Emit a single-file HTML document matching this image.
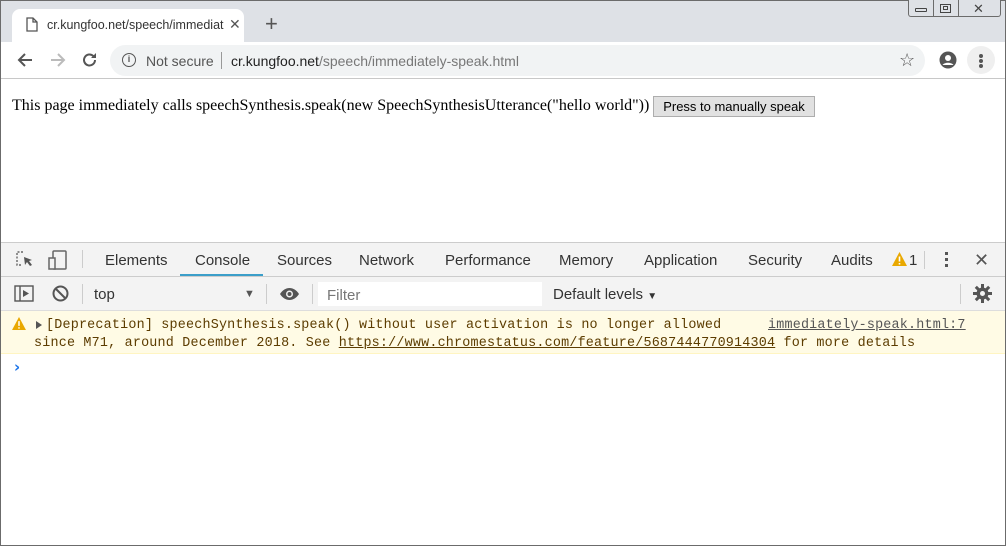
<!DOCTYPE html>
<html><head><style>
*{margin:0;padding:0;box-sizing:border-box}
body{width:1006px;height:546px;overflow:hidden;background:#fff;font-family:"Liberation Sans",sans-serif;position:relative}
.abs{position:absolute}
.ui{font-family:"Liberation Sans",sans-serif}
.mono{font-family:"Liberation Mono","DejaVu Sans Mono",monospace;font-size:13.4px;letter-spacing:0.2px;color:#5c3c00}
</style></head><body>
<div class="abs" style="left:0;top:0;width:1006px;height:546px;border:1px solid #6b6b6b;border-top:2px solid #6b6b6b"></div>
<div class="abs" style="left:1px;top:1px;width:1004px;height:41px;background:#dee1e6"></div>
<div class="abs" style="left:908px;top:0;width:93px;height:17px;border:1px solid #6b6b6b;border-top:none;border-radius:0 0 3px 3px;background:#dee1e6"></div>
<div class="abs" style="left:933px;top:0;width:1px;height:17px;background:#6b6b6b"></div>
<div class="abs" style="left:958px;top:0;width:1px;height:17px;background:#6b6b6b"></div>
<div class="abs" style="left:915px;top:8px;width:12px;height:4px;border:1px solid #444;border-radius:1px"></div>
<div class="abs" style="left:940px;top:4px;width:11px;height:9px;border:1px solid #444"></div>
<div class="abs" style="left:943px;top:6px;width:5px;height:4px;border:1px solid #444"></div>
<div class="abs ui" style="left:973px;top:1px;font-size:13px;color:#444">✕</div>
<div class="abs" style="left:12px;top:9px;width:232px;height:34px;background:#fff;border-radius:8px 8px 0 0"></div>
<svg class="abs" style="left:26px;top:17px" width="12" height="15" viewBox="0 0 12 15"><path d="M1 1h6l4 4v9H1z M7 1v4h4" fill="none" stroke="#555" stroke-width="1.3"/></svg>
<div class="abs ui" style="left:47px;top:18px;font-size:12.5px;color:#333;width:180px;overflow:hidden;white-space:nowrap">cr.kungfoo.net/speech/immediat</div>
<div class="abs ui" style="left:229px;top:16px;font-size:14px;color:#555">✕</div>
<div class="abs ui" style="left:265px;top:11px;font-size:22px;color:#555">+</div>
<div class="abs" style="left:1px;top:42px;width:1004px;height:37px;background:#fff;border-bottom:1px solid #c8c8c8"></div>
<svg class="abs" style="left:16px;top:52px" width="18" height="16" viewBox="0 0 18 16"><path d="M16 8H3M9 2L3 8l6 6" fill="none" stroke="#555" stroke-width="2"/></svg>
<svg class="abs" style="left:49px;top:52px" width="18" height="16" viewBox="0 0 18 16"><path d="M2 8h13M9 2l6 6-6 6" fill="none" stroke="#bbb" stroke-width="2"/></svg>
<svg class="abs" style="left:81px;top:51px" width="18" height="18" viewBox="0 0 18 18"><path d="M14 9a5.5 5.5 0 1 1-1.6-3.9" fill="none" stroke="#555" stroke-width="2"/><path d="M15 2v5h-5z" fill="#555"/></svg>
<div class="abs" style="left:110px;top:45px;width:815px;height:31px;background:#f1f3f4;border-radius:16px"></div>
<div class="abs" style="left:122px;top:53px;width:14px;height:14px;border:1.5px solid #555;border-radius:50%;font-size:9px;text-align:center;line-height:11px;color:#555;font-weight:bold">i</div>
<div class="abs ui" style="left:146px;top:53px;font-size:14px;color:#555">Not secure</div>
<div class="abs" style="left:221px;top:52px;width:1px;height:17px;background:#999"></div>
<div class="abs ui" style="left:231px;top:53px;font-size:14px;color:#222;white-space:nowrap">cr.kungfoo.net<span style="color:#777">/speech/immediately-speak.html</span></div>
<div class="abs ui" style="left:899px;top:50px;font-size:18px;color:#555">☆</div>
<svg class="abs" style="left:939px;top:51px" width="18" height="18" viewBox="0 0 18 18"><circle cx="9" cy="9" r="8.5" fill="#555"/><circle cx="9" cy="7" r="3" fill="#fff"/><path d="M3.5 14c2-3 9-3 11 0" fill="#fff"/></svg>
<div class="abs" style="left:967px;top:46px;width:28px;height:28px;border-radius:50%;background:#efefef"></div>
<div class="abs" style="left:979px;top:54px;width:4px;height:4px;border-radius:50%;background:#555;box-shadow:0 5px 0 #555,0 10px 0 #555"></div>
<div class="abs" style="left:12px;top:97px;font-family:'Liberation Serif',serif;font-size:16px;color:#000;white-space:nowrap">This page immediately calls speechSynthesis.speak(new SpeechSynthesisUtterance("hello world"))</div>
<div class="abs ui" style="left:653px;top:96px;width:162px;height:21px;background:#e1e1e1;border:1px solid #adadad;font-size:13px;text-align:center;line-height:19px;color:#000">Press to manually speak</div>
<div class="abs" style="left:1px;top:242px;width:1004px;height:35px;background:#f3f3f3;border-top:1px solid #ccc;border-bottom:1px solid #ccc"></div>
<svg class="abs" style="left:16px;top:251px" width="18" height="18" viewBox="0 0 18 18"><path d="M7 1H1v13h5" fill="none" stroke="#666" stroke-width="1.4" stroke-dasharray="2 1.5"/><path d="M8 6l8 3-3 1 3 4-2 1-3-4-2 3z" fill="#555"/></svg>
<svg class="abs" style="left:48px;top:250px" width="20" height="20" viewBox="0 0 20 20"><rect x="5" y="1" width="13" height="18" rx="1" fill="none" stroke="#666" stroke-width="1.5"/><rect x="1" y="8" width="6" height="11" fill="#f3f3f3" stroke="#666" stroke-width="1.5"/></svg>
<div class="abs" style="left:82px;top:250px;width:1px;height:18px;background:#ccc"></div>
<div class="abs ui" style="top:252px;font-size:15px;color:#333;left:0;width:900px;height:20px">
<span class="abs" style="left:105px">Elements</span><span class="abs" style="left:195px">Console</span><span class="abs" style="left:277px">Sources</span><span class="abs" style="left:359px">Network</span><span class="abs" style="left:445px">Performance</span><span class="abs" style="left:559px">Memory</span><span class="abs" style="left:644px">Application</span><span class="abs" style="left:748px">Security</span><span class="abs" style="left:831px">Audits</span></div>
<div class="abs" style="left:180px;top:274px;width:83px;height:2px;background:#3b9ec9"></div>
<svg class="abs" style="left:892px;top:252px" width="15" height="14" viewBox="0 0 15 14"><path d="M7.5 0L15 14H0z" fill="#e9a800"/><path d="M7.5 4.5v5M7.5 11v1.5" stroke="#fff" stroke-width="1.6"/></svg>
<div class="abs ui" style="left:909px;top:252px;font-size:15px;color:#333">1</div>
<div class="abs" style="left:924px;top:251px;width:1px;height:18px;background:#ccc"></div>
<div class="abs" style="left:945px;top:252px;width:3px;height:3px;background:#555;box-shadow:0 6px 0 #555,0 12px 0 #555"></div>
<div class="abs ui" style="left:974px;top:250px;font-size:18px;color:#555">✕</div>
<div class="abs" style="left:1px;top:277px;width:1004px;height:34px;background:#f3f3f3;border-bottom:1px solid #ddd"></div>
<svg class="abs" style="left:14px;top:285px" width="20" height="17" viewBox="0 0 20 17"><rect x="1" y="1" width="18" height="15" fill="none" stroke="#555" stroke-width="1.4"/><path d="M6 1v15" stroke="#555" stroke-width="1.4"/><path d="M9 5l6 3.5-6 3.5z" fill="#555"/></svg>
<svg class="abs" style="left:52px;top:285px" width="17" height="17" viewBox="0 0 17 17"><circle cx="8.5" cy="8.5" r="7" fill="none" stroke="#555" stroke-width="2"/><path d="M3.5 3.5l10 10" stroke="#555" stroke-width="2"/></svg>
<div class="abs" style="left:82px;top:284px;width:1px;height:20px;background:#ccc"></div>
<div class="abs ui" style="left:94px;top:286px;font-size:15px;color:#333">top</div>
<div class="abs ui" style="left:244px;top:288px;font-size:11px;color:#555">▼</div>
<div class="abs" style="left:266px;top:284px;width:1px;height:20px;background:#ccc"></div>
<svg class="abs" style="left:279px;top:287px" width="21" height="14" viewBox="0 0 21 14"><path d="M1 7c5-8 14-8 19 0-5 8-14 8-19 0z" fill="#555"/><circle cx="10.5" cy="7" r="3.5" fill="#f3f3f3"/><circle cx="10.5" cy="7" r="2" fill="#555"/></svg>
<div class="abs" style="left:312px;top:284px;width:1px;height:20px;background:#ccc"></div>
<div class="abs" style="left:318px;top:282px;width:224px;height:24px;background:#fff"></div>
<div class="abs ui" style="left:327px;top:287px;font-size:15px;color:#777">Filter</div>
<div class="abs ui" style="left:553px;top:286px;font-size:15px;color:#333">Default levels <span style="font-size:10px">▼</span></div>
<div class="abs" style="left:960px;top:284px;width:1px;height:20px;background:#ccc"></div>
<svg class="abs" style="left:973px;top:284px" width="19" height="19" viewBox="0 0 19 19"><path d="M9.5 0v19M0 9.5h19M2.8 2.8l13.4 13.4M16.2 2.8L2.8 16.2" stroke="#555" stroke-width="3"/><circle cx="9.5" cy="9.5" r="6" fill="#555"/><circle cx="9.5" cy="9.5" r="2.5" fill="#f3f3f3"/></svg>
<div class="abs" style="left:1px;top:311px;width:1004px;height:43px;background:#fffbe5;border-bottom:1px solid #fff5c2"></div>
<svg class="abs" style="left:12px;top:317px" width="14" height="13" viewBox="0 0 15 14"><path d="M7.5 0L15 14H0z" fill="#e9a800"/><path d="M7.5 4.5v5M7.5 11v1.5" stroke="#fff" stroke-width="1.6"/></svg>
<div class="abs" style="left:36px;top:321px;width:0;height:0;border-left:6px solid #555;border-top:4px solid transparent;border-bottom:4px solid transparent"></div>
<div class="abs mono" style="left:46px;top:318px;white-space:pre">[Deprecation] speechSynthesis.speak() without user activation is no longer allowed</div>
<div class="abs mono" style="left:768px;top:318px;text-decoration:underline;color:#555">immediately-speak.html:7</div>
<div class="abs mono" style="left:34px;top:336px;white-space:pre">since M71, around December 2018. See <span style="text-decoration:underline">https://www.chromestatus.com/feature/5687444770914304</span> for more details</div>
<div class="abs" style="left:14px;top:358px;font-size:15px;color:#1a73e8;font-weight:bold;font-family:'DejaVu Sans',sans-serif">›</div>
</body></html>
